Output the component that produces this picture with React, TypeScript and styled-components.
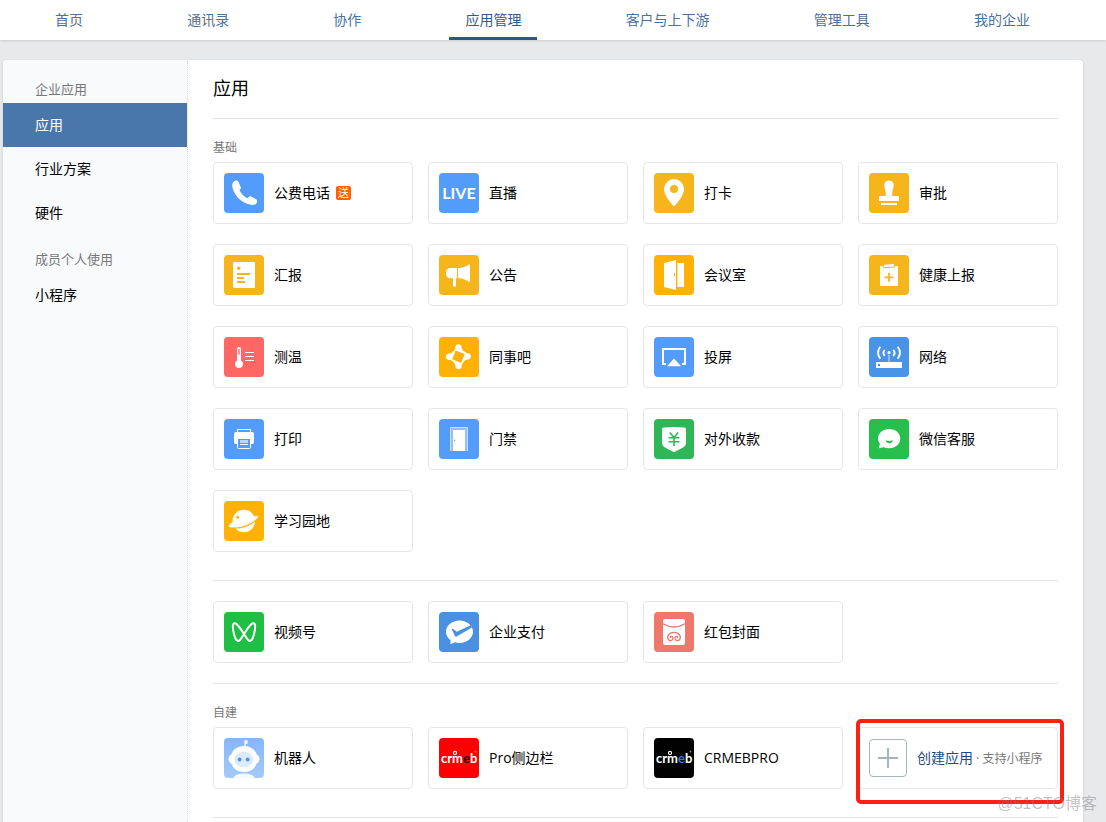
import React from "react";
import styled, { createGlobalStyle } from "styled-components";

const GlobalStyle = createGlobalStyle`
  * { box-sizing: border-box; }
  body {
    margin: 0;
    background: #e7e9eb;
    color: #000;
    font-family: "Open Sans", "Noto Sans CJK SC", sans-serif;
    font-size: 14px;
    line-height: 20px;
  }
  a { color: inherit; text-decoration: none; }
  h1, h2, ul { margin: 0; padding: 0; font-weight: 400; list-style: none; }
`;

const Page = styled.div`
  position: relative;
  display: flex;
  flex-direction: column;
  min-height: 100vh;
  overflow: hidden;
`;

const TopNav = styled.nav`
  display: flex;
  justify-content: space-between;
  height: 40px;
  padding: 0 60px 0 39px;
  background: #fff;
  box-shadow: 0 1px 2px rgba(0, 0, 0, 0.12);
`;

const NavLink = styled.a<{ $active?: boolean }>`
  padding: 10px 16px 7px;
  border-bottom: 3px solid ${(p) => (p.$active ? "#2f5785" : "transparent")};
  color: ${(p) => (p.$active ? "#2f5a8c" : "#4a719f")};
  white-space: nowrap;
`;

const Shell = styled.div`
  display: flex;
  flex: 1;
  margin: 20px 23px 0 3px;
  border-radius: 4px 4px 0 0;
  background: #fff;
  box-shadow: 0 1px 3px rgba(0, 0, 0, 0.12);
`;

const Sidebar = styled.aside`
  flex: 0 0 185px;
  padding-top: 5px;
  border-right: 1px dotted #d6dbe0;
  border-top-left-radius: 4px;
  background: #f8fafc;
`;

const SideHeading = styled.h2`
  padding: 15px 32px 5px;
  color: #787878;
  font-size: 13px;
  line-height: 18px;
`;

const SideLink = styled.a<{ $active?: boolean }>`
  display: block;
  padding: 0 32px;
  line-height: 44px;
  color: ${(p) => (p.$active ? "#fff" : "#000")};
  background: ${(p) => (p.$active ? "#4a77ab" : "transparent")};
`;

const Content = styled.main`
  flex: 1;
  min-width: 0;
  padding: 0 25px;
`;

const Title = styled.h1`
  padding: 16px 0 18px;
  border-bottom: 1px solid #dfe2e5;
  font-size: 18px;
  line-height: 24px;
`;

const Section = styled.section<{ $compact?: boolean }>`
  padding: 20px 0 ${(p) => (p.$compact ? 20 : 28)}px;
  border-bottom: 1px solid #e2e4e7;
`;

const SectionLabel = styled.h2`
  margin-bottom: 5px;
  color: #787878;
  font-size: 12px;
  line-height: 18px;
`;

const CardGrid = styled.div`
  display: grid;
  grid-template-columns: repeat(4, minmax(0, 1fr));
  gap: 20px 15px;
`;

const Card = styled.a`
  position: relative;
  display: flex;
  align-items: center;
  gap: 10px;
  height: 62px;
  padding: 10px;
  border: 1px solid #e4e6e9;
  border-radius: 4px;
  white-space: nowrap;
`;

const Tile = styled.svg<{ $bg: string }>`
  flex: none;
  width: 40px;
  height: 40px;
  border-radius: 4px;
  background: ${(p) => p.$bg};
`;

const Badge = styled.span`
  margin-left: -4px;
  width: 15px;
  border-radius: 2px;
  background: #ff6100;
  color: #fff;
  font-size: 11px;
  line-height: 14px;
  text-align: center;
`;

const PlusTile = styled.svg`
  flex: none;
  width: 38px;
  height: 38px;
  border: 1px solid #a5b3c3;
  border-radius: 4px;
`;

const CreateText = styled.span`
  color: #1c4b80;
`;

const CreateNote = styled.span`
  color: #787878;
  font-size: 12px;
`;

const Highlight = styled.span`
  position: absolute;
  inset: -9px -7px -16px -3px;
  border: 4px solid #ff2015;
  border-radius: 5px;
  pointer-events: none;
`;

const Watermark = styled.span`
  position: absolute;
  right: 9px;
  bottom: 8px;
  color: rgba(120, 120, 120, 0.45);
  font-family: "Liberation Sans", "Noto Sans CJK SC", sans-serif;
  font-size: 16px;
`;

const BLUE = "#549cfb";
const AMBER = "#f7b51c";
const YELLOW = "#ffb106";

type App = { name: string; bg: string; art: React.ReactNode; badge?: string };

const CrmebArt = ({ accent }: { accent: string }) => (
  <>
    <text x="2" y="25" fill="#fff" fontFamily="Lato" fontWeight="700" fontSize="13">
      crm<tspan fill={accent}>e</tspan>b
    </text>
    <circle cx="16" cy="15" r="1.6" fill="none" stroke="#fff" strokeWidth="1.1" />
    <circle cx="36.5" cy="13.500" r="0.9" fill="#fff" opacity="0.5" />
  </>
);

const basicApps: App[] = [
  {
    name: "公费电话", bg: BLUE, badge: "送",
    art: <path fill="#fff" d="M11.3 7.8C9.2 8.6 8 10.2 8.2 12.8C9 21.5 18 31.5 29 32C31.4 32 33 30.4 33.1 28.2Q33.1 26.9 32.2 26.3L27.2 23.4C25.6 22.7 24.4 24.4 23.2 25.2C20 23.5 16.8 20.2 15.5 17.2C16.4 16.2 17.3 15.4 16.7 14L14.3 8.4C13.7 7.4 12.5 7.3 11.3 7.8Z" />,
  },
  {
    name: "直播", bg: BLUE,
    art: <text x="20" y="26" textAnchor="middle" fill="#fff" fontFamily="Lato" fontWeight="700" fontSize="16">LIVE</text>,
  },
  {
    name: "打卡", bg: AMBER,
    art: <path fill="#fff" fillRule="evenodd" d="M20 6A10 10 0 0 0 10 16C10 22 15.5 28.5 20 33.5C24.5 28.5 30 22 30 16A10 10 0 0 0 20 6ZM20 12A4 4 0 1 1 20 20A4 4 0 1 1 20 12Z" />,
  },
  {
    name: "审批", bg: AMBER,
    art: <path fill="#fff" d="M20 7.4A4.7 4.7 0 0 0 15.3 12.2C15.4 15.5 17.2 18 16.7 23H11Q10 23 10 24V28H30V24Q30 23 29 23H23.3C22.8 18 24.6 15.5 24.7 12.2A4.7 4.7 0 0 0 20 7.4ZM12 30H28V32H12Z" />,
  },
  {
    name: "汇报", bg: AMBER,
    art: (
      <>
        <rect x="9" y="7" width="22" height="26" rx="1" fill="#fff" />
        <circle cx="14.7" cy="13.3" r="1.8" fill={AMBER} />
        <path stroke={AMBER} strokeWidth="2" d="M13 19H26M13 23H20M13 27H21" />
      </>
    ),
  },
  {
    name: "公告", bg: AMBER,
    art: <path fill="#fff" d="M18 13V23.3H17V31.5H14V23.3H11.5C8.5 23.3 7 21 7 18.2C7 15.4 8.5 13 11.5 13ZM19 13.2C23.5 13 28 11 31 9V27.3C28 25.3 23.5 23.3 19 23.1Z" />,
  },
  {
    name: "会议室", bg: YELLOW,
    art: (
      <>
        <path fill="#fff" d="M10 8L22 5V35L10 32ZM23.4 8H30V32H23.4Z" />
        <rect x="20" y="18" width="1" height="3" fill={YELLOW} />
      </>
    ),
  },
  {
    name: "健康上报", bg: AMBER,
    art: (
      <>
        <rect x="11" y="11" width="18" height="20" rx="1" fill="#fff" />
        <path fill="#fff" stroke={AMBER} d="M14.6 9.2L25.6 8.4V12L14.6 12.8Z" />
        <path stroke={AMBER} strokeWidth="1.8" d="M15.5 22.3H24.5M20 17.8V26.8" />
      </>
    ),
  },
  {
    name: "测温", bg: "#ff6764",
    art: (
      <>
        <path fill="#fff" d="M13 12A2 2 0 0 1 17 12V23.6A4 4 0 1 1 13 23.6Z" />
        <path stroke="#ff6764" strokeWidth="1.4" d="M15 12V17.5" />
        <path stroke="#fff" strokeWidth="1" d="M21 15.5H30M21 19.5H30M21 23.5H30" />
      </>
    ),
  },
  {
    name: "同事吧", bg: YELLOW,
    art: (
      <path
        fill="#fff"
        fillRule="evenodd"
        d="M19.4 7.3A3.3 3.3 0 0 1 22.7 10.6C22.5 12.5 24.6 14.5 28 16.3A3.2 3.2 0 1 1 28.6 22.6C26.3 22.8 24.2 24.8 22.6 28A3.2 3.2 0 1 1 16.4 29C16.4 26.5 14.6 24.5 11 22.8A3.2 3.2 0 1 1 10.300 16.600C12.8 16.4 14.800 14.200 16.3 11.4A3.3 3.3 0 0 1 19.4 7.3ZM16.600 13.500L13.200 22.200L22 25.900L25.700 16.900Z"
      />
    ),
  },
  {
    name: "投屏", bg: BLUE,
    art: (
      <>
        <path fill="none" stroke="#fff" strokeWidth="2" d="M12 27H9V12H31V27H28" />
        <path fill="#fff" d="M20 21.5L27 29.3H13Z" />
      </>
    ),
  },
  {
    name: "网络", bg: "#4a94e8",
    art: (
      <>
        <path fill="#fff" fillRule="evenodd" d="M7 25H33V31H7ZM9 27V29H11V27Z" />
        <path stroke="#a9cef5" strokeWidth="1.4" d="M20 18V25" />
        <circle cx="20" cy="15.7" r="1.6" fill="#fff" />
        <path fill="none" stroke="#fff" strokeWidth="1.9" d="M11.3 9.8Q6.8 15.8 11.3 21.8M28.7 9.8Q33.2 15.8 28.7 21.8M15.8 12.8Q13 15.8 15.8 18.8M24.2 12.8Q27 15.8 24.2 18.8" />
      </>
    ),
  },
  {
    name: "打印", bg: BLUE,
    art: (
      <>
        <path fill="none" stroke="#fff" d="M13.5 14V10.5H26.5V14" />
        <rect x="10" y="13" width="20" height="12" rx="2" fill="#fff" />
        <rect x="13.5" y="19.5" width="13" height="10" rx="1" fill={BLUE} stroke="#fff" />
        <rect x="16" y="21" width="8" height="3" fill="#b9d6fd" />
        <path stroke="#fff" d="M16 25.5H24" />
      </>
    ),
  },
  {
    name: "门禁", bg: BLUE,
    art: (
      <>
        <path fill="#8fbffd" d="M11 8H29V32H11Z" />
        <path fill="none" stroke="#c9e0fe" d="M11.5 32V8.5H28.5V32" />
        <path fill="#fff" d="M14 11H26V32H14Z" />
        <circle cx="15.6" cy="21.2" r="0.7" fill={BLUE} />
      </>
    ),
  },
  {
    name: "对外收款", bg: "#2fb757",
    art: (
      <>
        <path fill="#fff" d="M8 10.5C8 9 8.6 8.6 10 8.5Q20 7.5 30 8.5C31.4 8.6 32 9 32 10.5V23.5C32 26 31 27.2 29 28.5L20 33.2L11 28.5C9 27.2 8 26 8 23.5Z" />
        <path fill="none" stroke="#2fb757" strokeWidth="1.6" d="M15.8 13.6L20 18.5L24.2 13.6M20 18.5V27M14.5 18.8H25.5M14.5 22.8H25.5" />
      </>
    ),
  },
  {
    name: "微信客服", bg: "#27bf4c",
    art: (
      <>
        <path fill="#fff" d="M20.2 10C14 10 9 14.2 9 19.6C9 21.8 10 23.6 11 25L9.6 29.2L14.8 28.2C16.4 28.9 18.2 29.3 20.2 29.3C26.4 29.3 31.3 25 31.3 19.6S26.4 10 20.2 10Z" />
        <path fill="#27bf4c" d="M16.6 21.3Q20.3 22.8 24 21.3Q23.3 24.2 20.3 24.2T16.6 21.3Z" />
      </>
    ),
  },
  {
    name: "学习园地", bg: YELLOW,
    art: (
      <>
        <circle cx="19.8" cy="20" r="11.2" fill="#fff" />
        <path fill="none" stroke={YELLOW} strokeWidth="1.3" d="M9 27.2C18 27.6 28 23.5 32 18.5" />
        <path fill="#fff" d="M9 20.8C5.5 22.8 4.3 24.6 5.3 25.7C7.5 27.7 17.5 26 24.5 22.7C31.5 19.5 34.9 16.5 33.8 15.3C33.2 14.6 31.6 14.9 30.2 15.3L20 14Z" />
        <circle cx="13.7" cy="16.3" r="1.5" fill={YELLOW} />
      </>
    ),
  },
];

const extraApps: App[] = [
  {
    name: "视频号", bg: "#1fbe44",
    art: <path fill="none" stroke="#fff" strokeWidth="2" d="M20 22C17 27 15 30 13 28.5C10.5 26.5 8.4 17 9 12.8C9.4 10.8 11.2 10.8 12.5 12C15 14.5 17.5 18 20 22C23 27 25 30 27 28.5C29.5 26.5 31.6 17 31 12.8C30.6 10.8 28.8 10.8 27.5 12C25 14.5 22.5 18 20 22Z" />,
  },
  {
    name: "企业支付", bg: "#4a90e2",
    art: (
      <>
        <path fill="#fff" d="M20.5 8.5C13 8.5 7 13.5 7 19.7C7 23.2 8.8 26.2 11.6 28.3L11.4 32.2L16 30.3C17.4 30.7 18.9 30.9 20.5 30.9C28 30.9 34 25.9 34 19.7C34 13.5 28 8.5 20.5 8.5Z" />
        <path fill="#4a90e2" d="M12.8 17.2Q13.4 16.6 14.2 17.1L17.8 19.7L31.6 13.3L33 15.5L17.6 24.5Q16.5 25 15.9 24Z" />
      </>
    ),
  },
  {
    name: "红包封面", bg: "#f0776c",
    art: (
      <>
        <rect x="9" y="7" width="22" height="26" rx="2" fill="#fff" />
        <g fill="none" stroke="#f0776c" strokeWidth="1.4">
          <path d="M8.5 11.5Q20 18.5 31.5 11.5" />
          <path d="M16.5 26.2C15.5 24.4 18.8 23.6 18.9 26C18.9 28.7 16.5 29.1 15 28.2C13.3 27 13.2 24.3 14.8 22.5C17 19.7 23 19.7 25.2 22.5C26.8 24.3 26.7 27 25 28.2C23.5 29.1 21.1 28.7 21.1 26C21.2 23.6 24.5 24.4 23.5 26.2" />
        </g>
      </>
    ),
  },
];

const ownApps: App[] = [
  {
    name: "机器人", bg: "linear-gradient(#84b6fb, #a4cbf8)",
    art: (
      <>
        <path stroke="#fff" strokeWidth="1.2" d="M20.5 9L21.8 4.5" />
        <circle cx="22" cy="4" r="1.9" fill="#fff" />
        <ellipse cx="20" cy="40" rx="10.5" ry="4.5" fill="#f4f9ff" />
        <path fill="#fff" d="M20 8C13.5 8 8.5 12 7.3 16.5C5.5 17.5 4.5 19.2 4.5 21S5.5 24.5 7.3 25.5C9 30.5 14 34 20 34S31 30.5 32.7 25.5C34.5 24.5 35.5 22.8 35.5 21S34.5 17.5 32.7 16.5C31.5 12 26.5 8 20 8Z" />
        <ellipse cx="19.7" cy="21.5" rx="9.5" ry="7.8" fill="#dceafd" />
        <circle cx="15.6" cy="21.5" r="1.9" fill="#4b93f2" />
        <circle cx="23.7" cy="21.5" r="1.9" fill="#4b93f2" />
      </>
    ),
  },
  { name: "Pro侧边栏", bg: "#fe0000", art: <CrmebArt accent="#200000" /> },
  { name: "CRMEBPRO", bg: "#020202", art: <CrmebArt accent="#2f7be0" /> },
];

const AppCard = ({ app }: { app: App }) => (
  <Card href="#">
    <Tile viewBox="0 0 40 40" $bg={app.bg} aria-hidden="true">{app.art}</Tile>
    <span>{app.name}</span>
    {app.badge && <Badge>{app.badge}</Badge>}
  </Card>
);

const navItems = ["首页", "通讯录", "协作", "应用管理", "客户与上下游", "管理工具", "我的企业"];

export default function App() {
  return (
    <Page>
      <GlobalStyle />
      <TopNav>
        {navItems.map((item) => (
          <NavLink key={item} href="#" $active={item === "应用管理"}>{item}</NavLink>
        ))}
      </TopNav>
      <Shell>
        <Sidebar>
          <SideHeading>企业应用</SideHeading>
          <SideLink href="#" $active>应用</SideLink>
          <SideLink href="#">行业方案</SideLink>
          <SideLink href="#">硬件</SideLink>
          <SideHeading>成员个人使用</SideHeading>
          <SideLink href="#">小程序</SideLink>
        </Sidebar>
        <Content>
          <Title>应用</Title>
          <Section>
            <SectionLabel>基础</SectionLabel>
            <CardGrid>
              {basicApps.map((app) => <AppCard key={app.name} app={app} />)}
            </CardGrid>
          </Section>
          <Section $compact>
            <CardGrid>
              {extraApps.map((app) => <AppCard key={app.name} app={app} />)}
            </CardGrid>
          </Section>
          <Section>
            <SectionLabel>自建</SectionLabel>
            <CardGrid>
              {ownApps.map((app) => <AppCard key={app.name} app={app} />)}
              <Card href="#">
                <PlusTile viewBox="0 0 36 36" aria-hidden="true">
                  <path stroke="#a5b3c3" strokeWidth="2" d="M8 18H28M18 8V28" />
                </PlusTile>
                <span>
                  <CreateText>创建应用</CreateText>
                  <CreateNote> · 支持小程序</CreateNote>
                </span>
                <Highlight />
              </Card>
            </CardGrid>
          </Section>
        </Content>
      </Shell>
      <Watermark>@51CTO博客</Watermark>
    </Page>
  );
}
